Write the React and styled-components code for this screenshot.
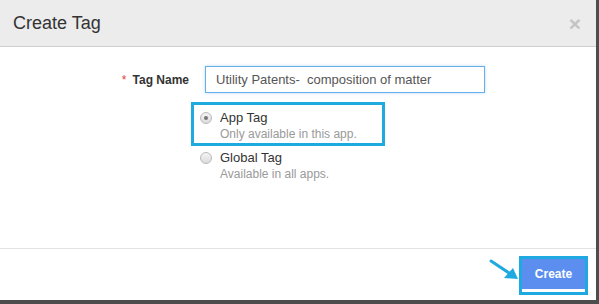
import React from 'react';
import styled, { createGlobalStyle } from 'styled-components';

const Global = createGlobalStyle`
  html, body { margin: 0; padding: 0; }
  body {
    background: #4d4d4d;
    font-family: "Liberation Sans", Arial, sans-serif;
    width: 599px;
    height: 304px;
    overflow: hidden;
  }
`;

const Modal = styled.div`
  width: 596px;
  height: 300px;
  background: #fff;
  display: flex;
  flex-direction: column;
  position: relative;
`;

const Header = styled.div`
  height: 47px;
  background: #ececec;
  border-bottom: 1px solid #cfcfcf;
  display: flex;
  align-items: center;
  justify-content: space-between;
  padding: 0 15px 0 13px;
  box-sizing: border-box;
`;

const Title = styled.h4`
  margin: 0;
  font-size: 18px;
  font-weight: normal;
  color: #333;
`;

const Close = styled.span`
  font-size: 21px;
  font-weight: bold;
  color: #c4c4c4;
  line-height: 1;
`;

const Body = styled.div`
  flex: 1;
  padding-top: 19px;
`;

const Row = styled.div`
  display: grid;
  grid-template-columns: 190px 280px;
  column-gap: 15px;
  align-items: center;
`;

const Label = styled.label`
  text-align: right;
  font-size: 12px;
  font-weight: bold;
  color: #333;
  padding-right: 1px;
`;

const Star = styled.span`
  color: #e4393c;
  margin-right: 6px;
  font-weight: normal;
`;

const Input = styled.input`
  height: 27px;
  box-sizing: border-box;
  border: 1px solid #66afe9;
  box-shadow: 0 0 3px rgba(102, 175, 233, 0.45);
  font-family: inherit;
  font-size: 13px;
  color: #555;
  padding: 0 10px;
  outline: none;
`;

const Options = styled.div`
  margin: 9px 0 0 191px;
  display: flex;
  flex-direction: column;
  gap: 4px;
`;

const Highlight = styled.div`
  border: 3px solid #1fa9e1;
  box-sizing: border-box;
  width: ${({ w }) => w}px;
  padding: ${({ pad }) => pad};
`;

const Option = styled.div`
  display: flex;
  align-items: flex-start;
  padding-left: ${({ indent }) => indent}px;
`;

const Radio = styled.span`
  width: 12px;
  height: 12px;
  border-radius: 50%;
  border: 1px solid #b9b9b9;
  background: linear-gradient(#f4f4f4, #dcdcdc);
  box-sizing: border-box;
  margin: 2px 8px 0 0;
  display: flex;
  align-items: center;
  justify-content: center;
  &::after {
    content: '';
    width: 4px;
    height: 4px;
    border-radius: 50%;
    background: ${({ checked }) => (checked ? '#777' : 'transparent')};
  }
`;

const OptionText = styled.div`
  display: flex;
  flex-direction: column;
  gap: 2px;
`;

const OptionTitle = styled.span`
  font-size: 13px;
  color: #333;
  line-height: 15px;
`;

const OptionHint = styled.span`
  font-size: 12px;
  color: #9a9a9a;
  line-height: 15px;
`;

const Footer = styled.div`
  height: 52px;
  border-top: 1px solid #e3e3e3;
  display: flex;
  justify-content: flex-end;
  align-items: flex-start;
  padding: 7px 8px 0 0;
  box-sizing: border-box;
  position: relative;
`;

const Button = styled.button`
  width: 63px;
  height: 30px;
  border: none;
  background: #5b8eef;
  color: #fff;
  font-family: inherit;
  font-size: 12px;
  font-weight: bold;
  display: block;
`;

const Arrow = styled.svg`
  position: absolute;
  left: 488px;
  top: 9px;
`;

export default function App() {
  return (
    <>
      <Global />
      <Modal>
        <Header>
          <Title>Create Tag</Title>
          <Close>×</Close>
        </Header>
        <Body>
          <Row>
            <Label><Star>*</Star>Tag Name</Label>
            <Input defaultValue="Utility Patents-  composition of matter" />
          </Row>
          <Options>
            <Highlight w={194} pad="5px 0 1px 0">
              <Option indent={6}>
                <Radio checked />
                <OptionText>
                  <OptionTitle>App Tag</OptionTitle>
                  <OptionHint>Only available in this app.</OptionHint>
                </OptionText>
              </Option>
            </Highlight>
            <Option indent={9}>
              <Radio />
              <OptionText>
                <OptionTitle>Global Tag</OptionTitle>
                <OptionHint>Available in all apps.</OptionHint>
              </OptionText>
            </Option>
          </Options>
        </Body>
        <Footer>
          <Arrow width="32" height="24" viewBox="0 0 32 24">
            <line x1="3" y1="3" x2="24" y2="17" stroke="#1fa9e1" strokeWidth="3" strokeLinecap="round" />
            <polygon points="30,21 16,20 25,10" fill="#1fa9e1" />
          </Arrow>
          <Highlight w={69} pad="0 0 3px 0">
            <Button>Create</Button>
          </Highlight>
        </Footer>
      </Modal>
    </>
  );
}
